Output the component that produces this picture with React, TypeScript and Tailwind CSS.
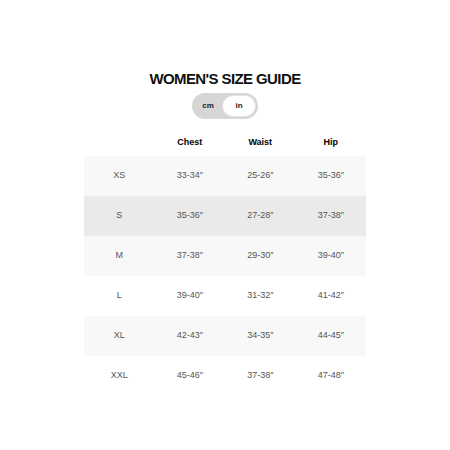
const rows = [
  { size: "XS", chest: "33-34″", waist: "25-26″", hip: "35-36″", bg: "bg-[#f8f8f8]" },
  { size: "S", chest: "35-36″", waist: "27-28″", hip: "37-38″", bg: "bg-[#eaeaea]" },
  { size: "M", chest: "37-38″", waist: "29-30″", hip: "39-40″", bg: "bg-[#f8f8f8]" },
  { size: "L", chest: "39-40″", waist: "31-32″", hip: "41-42″", bg: "bg-white" },
  { size: "XL", chest: "42-43″", waist: "34-35″", hip: "44-45″", bg: "bg-[#f8f8f8]" },
  { size: "XXL", chest: "45-46″", waist: "37-38″", hip: "47-48″", bg: "bg-white" },
];

export default function App() {
  return (
    <div className="w-[450px] h-[450px] bg-white flex flex-col items-center pt-[68px] font-['Liberation_Sans',Arial,sans-serif]">
      <h1 className="text-[15px] leading-[22px] font-bold text-[#111] tracking-[-0.6px]">
        WOMEN'S SIZE GUIDE
      </h1>

      {/* cm / in toggle */}
      <div className="mt-[3px] w-[66px] h-[26px] rounded-full bg-[#d6d6d6] flex items-center p-[2px]">
        <span className="flex-1 text-center text-[8px] font-bold text-[#222]">cm</span>
        <span className="w-[34px] h-[22px] rounded-full bg-white border border-[#e2e2e2] flex items-center justify-center text-[8px] font-bold text-[#222]">
          in
        </span>
      </div>

      <div className="mt-[11px] w-[282px]">
        <div className="grid grid-cols-4 h-[26px] items-center text-[9px] font-bold text-black">
          <span />
          <span className="text-center">Chest</span>
          <span className="text-center">Waist</span>
          <span className="text-center">Hip</span>
        </div>
        {rows.map((r) => (
          <div
            key={r.size}
            className={`grid grid-cols-4 h-[40px] items-center text-[9px] text-[#555] ${r.bg}`}
          >
            <span className="text-center">{r.size}</span>
            <span className="text-center">{r.chest}</span>
            <span className="text-center">{r.waist}</span>
            <span className="text-center">{r.hip}</span>
          </div>
        ))}
      </div>
    </div>
  );
}
